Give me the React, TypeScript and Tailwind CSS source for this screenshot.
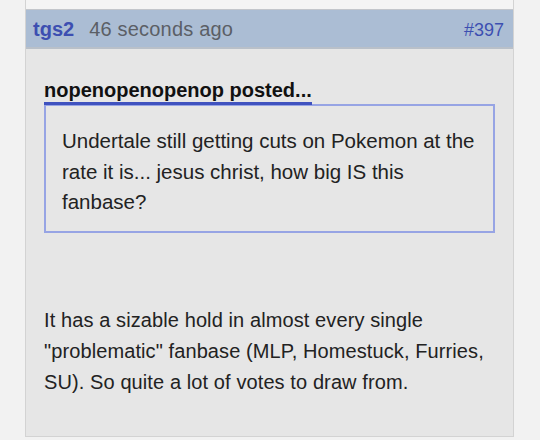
import React from 'react';

const font = { fontFamily: '"Liberation Sans", Arial, Helvetica, sans-serif' };

export default function App() {
  return (
    <div className="w-[540px] h-[440px] bg-[#f2f2f2] overflow-hidden" style={font}>
      <div className="ml-[25px] w-[489px] h-[437px] bg-[#e6e6e6] border-x border-b border-[#d3d3d3]">
        <div className="h-[10px] bg-[#f4f4f4] border-b border-[#c3c6cb]" />

        {/* post header */}
        <div className="h-[39px] bg-[#abbdd4] border-b-2 border-[#b9c0c9] flex items-center pl-[7px] pr-[9px]">
          <div className="flex-1 flex items-baseline justify-between text-[20px]">
            <div className="flex items-baseline gap-[15px]">
              <span className="font-bold text-[#3d4fb1]">tgs2</span>
              <span className="text-[#5b5f66] tracking-[0.2px]">46 seconds ago</span>
            </div>
            <span className="text-[18px] text-[#3d4fb1]">#397</span>
          </div>
        </div>

        <div className="px-[18px] pt-[29px]">
          <div className="inline-block text-[20px] leading-[24px] font-bold text-[#111] border-b-[3px] border-[#3f52bf]">
            nopenopenopenop posted...
          </div>
          <div className="-mt-[1px] border-2 border-[#97a4e4] pl-[16px] pr-[10px] pt-[20px] pb-[13px] text-[20.5px] leading-[30.5px] text-[#222]">
            Undertale still getting cuts on Pokemon at the rate it is... jesus christ, how big IS this fanbase?
          </div>
          <p className="mt-[72px] text-[20px] leading-[31px] text-[#222] pr-[10px] tracking-[0.1px]">
            It has a sizable hold in almost every single "problematic" fanbase (MLP, Homestuck, Furries, SU). So quite a lot of votes to draw from.
          </p>
        </div>
      </div>
    </div>
  );
}
